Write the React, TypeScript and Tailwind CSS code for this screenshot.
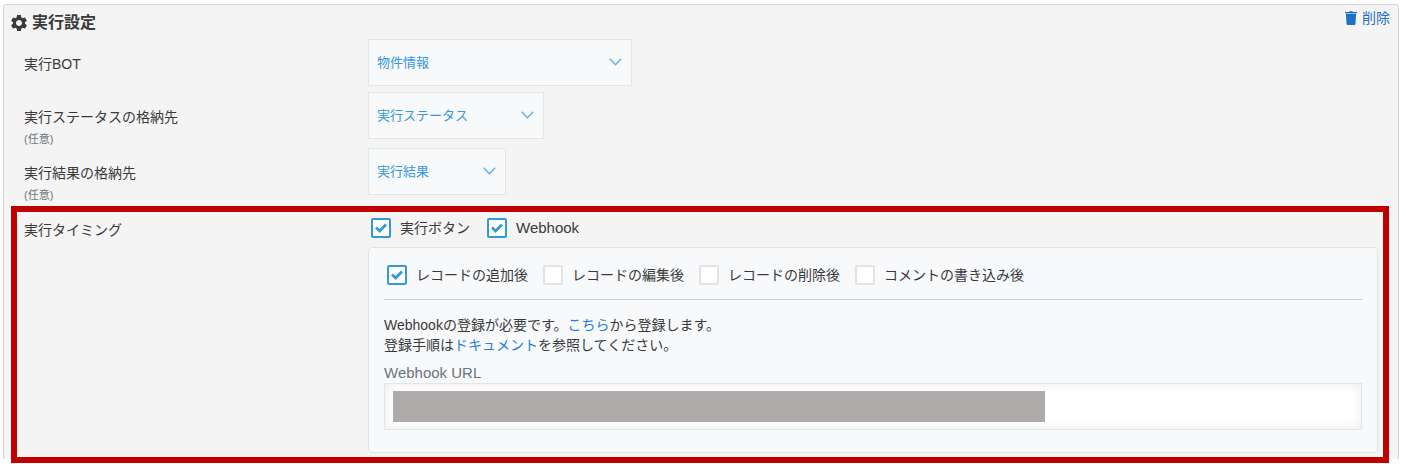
import React, { useId, useState } from "react";
import { MdSettings } from "react-icons/md";

function Chevron() {
  return (
    <svg viewBox="0 0 13 8" className="pointer-events-none absolute top-[19px] right-[10px] h-2 w-[13px]" fill="none" stroke="#5fb0e8" strokeWidth="1.4" aria-hidden="true">
      <path d="M0.8 0.8 L6.5 6.8 L12.2 0.8" />
    </svg>
  );
}

function Trash() {
  return (
    <svg viewBox="0 0 12 14" className="h-[14px] w-3" fill="currentColor" aria-hidden="true">
      <path d="M4 0.9 L4.4 0.2 H7.6 L8 0.9 H11.5 A0.4 0.4 0 0 1 12 1.3 V2.2 H0 V1.3 A0.4 0.4 0 0 1 0.5 0.9 Z" />
      <path d="M0.9 2.8 H11.1 L10.5 12.7 A1.3 1.3 0 0 1 9.2 13.9 H2.8 A1.3 1.3 0 0 1 1.5 12.7 Z" />
    </svg>
  );
}

function Dropdown({ id, value, width }: { id: string; value: string; width: string }) {
  return (
    <div className={`relative ${width}`}>
      <select
        id={id}
        className="h-[47px] w-full appearance-none border border-[#e3e7e8] bg-[#f7f9fb] px-2 text-[13px] text-[#3498db]"
      >
        <option>{value}</option>
      </select>
      <Chevron />
    </div>
  );
}

function Field({ id, label, optional, value, width }: { id: string; label: string; optional?: boolean; value: string; width: string }) {
  return (
    <div className="flex">
      <div className="w-[344px] shrink-0 pt-[15px]">
        <label htmlFor={id} className="block leading-5">{label}</label>
        {optional && <p className="mt-1 text-[11px] leading-4 text-[#6c757d]">(任意)</p>}
      </div>
      <Dropdown id={id} value={value} width={width} />
    </div>
  );
}

function Check({ label, checked = false, size = "text-[14px]" }: { label: string; checked?: boolean; size?: string }) {
  const id = useId();
  const [on, setOn] = useState(checked);
  return (
    <div className="flex items-center gap-[9px]">
      <span className="relative block size-5">
        <input
          id={id}
          type="checkbox"
          checked={on}
          onChange={(e) => setOn(e.target.checked)}
          className="peer block size-5 appearance-none rounded-xs border-2 border-[#e3e3e3] bg-white checked:border-[#3498db]"
        />
        <svg viewBox="0 0 20 20" className="pointer-events-none absolute inset-0 hidden size-5 peer-checked:block" fill="none" stroke="#3498db" strokeWidth="2.8" aria-hidden="true">
          <path d="M5 9.6 L8.6 13 L15 6.6" />
        </svg>
      </span>
      <label htmlFor={id} className={`leading-5 ${size}`}>{label}</label>
    </div>
  );
}

export default function App() {
  return (
    <main className="bg-white pt-1 pr-[7px] pb-1 pl-[3px] font-['Liberation_Sans','Noto_Sans_CJK_JP',sans-serif] text-[14px] text-[#3a3a3a]">
      <section className="flex flex-col rounded-t-sm border border-b-0 border-[#d6d6d6] bg-[#f4f4f4]">
        <header className="flex items-start justify-between pr-2 pl-[5px]">
          <h2 className="flex items-center gap-[3px] pt-2 text-[16px] leading-5 font-bold">
            <MdSettings className="size-5" aria-hidden="true" />
            実行設定
          </h2>
          <button type="button" className="flex items-center gap-[5px] pt-[3px] leading-5 text-[#1f70c1]">
            <Trash />
            削除
          </button>
        </header>

        <div className="mt-[6px] pl-5">
          <Field id="bot" label="実行BOT" value="物件情報" width="w-[264px]" />
          <div className="mt-[6px] flex flex-col gap-px">
            <Field id="status" label="実行ステータスの格納先" optional value="実行ステータス" width="w-[176px]" />
            <Field id="result" label="実行結果の格納先" optional value="実行結果" width="w-[138px]" />
          </div>
        </div>

        <div className="mt-[3px] mr-[9px] -mb-1 ml-[7px] border-6 border-[#c00000] pb-1 pl-[7px]">
          <div className="flex pr-[5px]">
            <h3 className="w-[344px] shrink-0 pt-2 leading-5">実行タイミング</h3>
            <div className="min-w-0 flex-1">
              <div className="flex gap-[17px] pt-[6px] pl-[3px]">
                <Check label="実行ボタン" checked />
                <Check label="Webhook" checked size="text-[15px]" />
              </div>
              <div className="mt-[9px] rounded-sm border border-[#dfe3ea] bg-[#f8f9fb] px-[15px] pb-[22px]">
                <div className="flex gap-[15px] border-b border-[#cccccc] pt-[17px] pb-[14px] pl-[3px]">
                  <Check label="レコードの追加後" checked />
                  <Check label="レコードの編集後" />
                  <Check label="レコードの削除後" />
                  <Check label="コメントの書き込み後" />
                </div>
                <p className="mt-[15px] leading-5">
                  Webhookの登録が必要です。<a href="#register" className="text-[#1f7fd6]">こちら</a>から登録します。
                  <br />
                  登録手順は<a href="#docs" className="text-[#1f7fd6]">ドキュメント</a>を参照してください。
                </p>
                <label htmlFor="webhook-url" className="mt-2 block text-[15px] leading-5 text-[#6c757d]">Webhook URL</label>
                <div className="relative">
                  <input
                    id="webhook-url"
                    type="text"
                    readOnly
                    className="block h-[47px] w-full border border-[#e3e6e8] bg-white px-2 shadow-[inset_0_0_12px_rgba(0,0,0,0.08)]"
                  />
                  <div className="absolute inset-y-2 left-[9px] w-2/3 bg-[#afabaa]" />
                </div>
              </div>
            </div>
          </div>
        </div>
      </section>
    </main>
  );
}
